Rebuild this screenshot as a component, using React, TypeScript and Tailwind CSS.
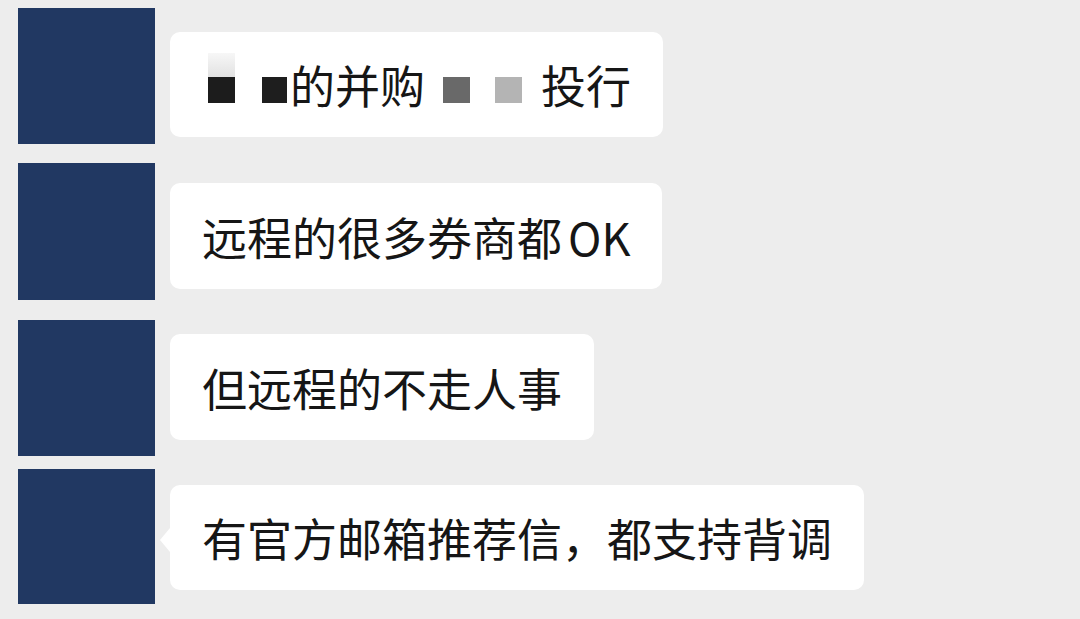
const rows = [
  { avatar: "mt-[8px] h-[136px]", bubble: "mt-[32px] h-[105px]" },
  { avatar: "mt-[19px] h-[137px]", bubble: "mt-[39px] h-[106px]" },
  { avatar: "mt-[20px] h-[136px]", bubble: "mt-[34px] h-[106px]" },
  { avatar: "mt-[13px] h-[135px]", bubble: "mt-[29px] h-[105px]" },
];

function Mosaic() {
  return (
    <>
      <span className="ml-[6px] mb-[13px] flex w-[27px] flex-col">
        <span className="h-[24px] w-full bg-gradient-to-b from-[#f7f7f7] to-[#e2e2e2]" />
        <span className="h-[26px] w-full bg-[#1c1c1c]" />
      </span>
      <span className="ml-[27px] mt-[11px] h-[26px] w-[25px] bg-[#1e1e1e]" />
      <span className="ml-[3px]">的并购</span>
      <span className="ml-[18px] mt-[11px] h-[26px] w-[27px] bg-[#696969]" />
      <span className="ml-[25px] mt-[11px] h-[26px] w-[27px] bg-[#b4b4b4]" />
      <span className="ml-[19px]">投行</span>
    </>
  );
}

function BubbleText({ i }: { i: number }) {
  if (i === 0) return <Mosaic />;
  if (i === 1)
    return (
      <>
        <span>远程的很多券商都</span>
        <span className="ml-[6px]">OK</span>
      </>
    );
  if (i === 2) return <span>但远程的不走人事</span>;
  return <span>有官方邮箱推荐信，都支持背调</span>;
}

export default function App() {
  return (
    <div
      className="h-[619px] w-[1080px] overflow-hidden bg-[#ededed] text-[#161616]"
      style={{ fontFamily: '"Noto Sans CJK SC", "Noto Sans", sans-serif' }}
    >
      <div className="flex flex-col pl-[18px]">
        {rows.map((row, i) => (
          <div key={i} className="flex items-start">
            <div className={`w-[137px] shrink-0 bg-[#213862] ${row.avatar}`} />
            <div
              className={`relative ml-[15px] flex items-center whitespace-nowrap rounded-[10px] bg-white px-[32px] text-[45px] leading-none ${row.bubble}`}
            >
              {i === 3 && (
                <span className="absolute left-[-10px] top-[43px] h-0 w-0 border-y-[12px] border-r-[10px] border-y-transparent border-r-white" />
              )}
              <BubbleText i={i} />
            </div>
          </div>
        ))}
      </div>
    </div>
  );
}
